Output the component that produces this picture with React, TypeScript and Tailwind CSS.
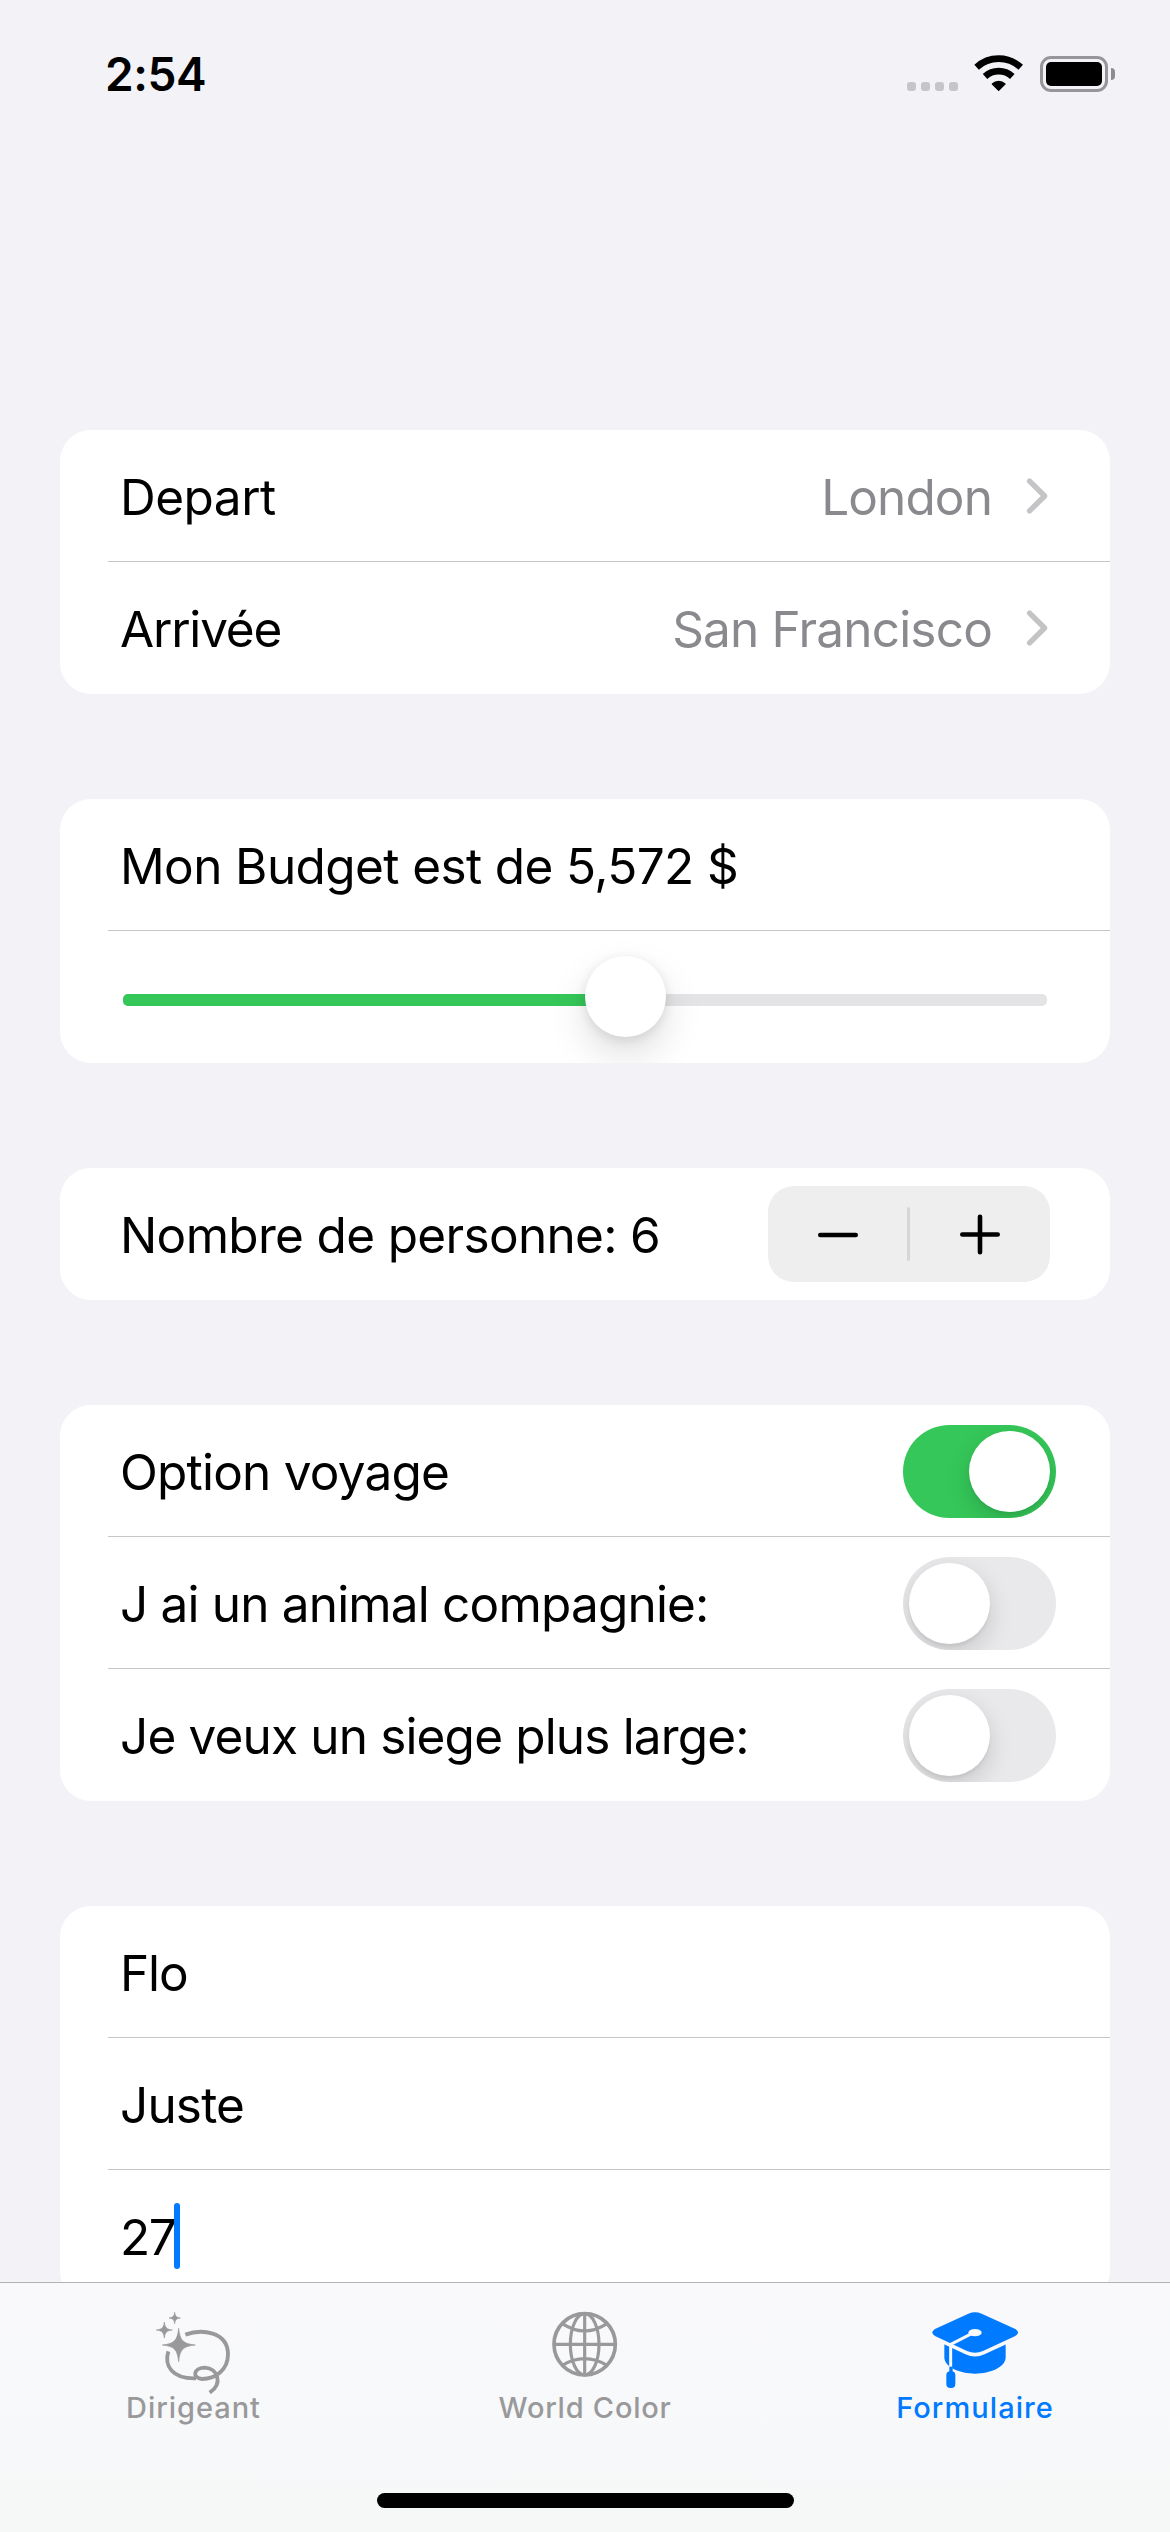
import type { ReactNode } from "react";

function StatusBar() {
  return (
    <header className="flex h-[141px] shrink-0 items-start justify-between pl-[105px] pr-[55px]">
      <div className="pt-[46px] text-[46px] font-semibold leading-[56px] tracking-[-0.42px]">2:54</div>
      <div className="flex pt-[53px]">
        <div className="flex gap-[5px] pt-[29px]">
          <span className="size-[9px] rounded-[3px] bg-[#c5c5ca]" />
          <span className="size-[9px] rounded-[3px] bg-[#c5c5ca]" />
          <span className="size-[9px] rounded-[3px] bg-[#c5c5ca]" />
          <span className="size-[9px] rounded-[3px] bg-[#c5c5ca]" />
        </div>
        <svg className="ml-[15px] h-10 w-[52px]" viewBox="280 69 156 120" fill="none" stroke="#000">
          <path d="M290.8 111.8A98 98 0 0 1 423.2 111.8" strokeWidth="20" />
          <path d="M316.1 139.4A60.5 60.5 0 0 1 397.9 139.4" strokeWidth="20" />
          <path d="M357 181L338 162A28 28 0 0 1 376 162Z" fill="#000" strokeWidth="4" strokeLinejoin="round" />
        </svg>
        <div className="ml-[15px] mt-[3px] h-9 w-[68px] rounded-[11px] border-[3px] border-[#95959a] p-[3px]">
          <div className="h-full w-full rounded-[5px] bg-black" />
        </div>
        <div className="ml-[3px] mt-[15px] h-3 w-1 rounded-r-full bg-[#8c8c91]" />
      </div>
    </header>
  );
}

function Card({ children }: { children: ReactNode }) {
  return <section className="shrink-0 overflow-hidden rounded-[31px] bg-white">{children}</section>;
}

function Row({ children, last = false }: { children: ReactNode; last?: boolean }) {
  return (
    <div className="h-[132px] pl-12">
      <div
        className={
          last
            ? "flex h-full items-center justify-between pl-3"
            : "flex h-full items-center justify-between border-b border-[#c6c6c8] pl-3"
        }
      >
        {children}
      </div>
    </div>
  );
}

function Label({ children, className }: { children: ReactNode; className: string }) {
  return <span className={`pt-[2px] text-[49.5px] leading-[60px] whitespace-nowrap ${className}`}>{children}</span>;
}

function Chevron() {
  return (
    <svg className="h-[38px] w-6" viewBox="0 0 24 38" fill="none" stroke="#c4c4c6" strokeWidth="5.4" strokeLinecap="round" strokeLinejoin="round">
      <path d="M4.6 4.2L19.6 19L4.6 33.8" />
    </svg>
  );
}

function PickerRow({ label, value, last }: { label: ReactNode; value: ReactNode; last?: boolean }) {
  return (
    <Row last={last}>
      {label}
      <div className="flex items-center pr-[61px]">
        {value}
        <div className="ml-[33px]">
          <Chevron />
        </div>
      </div>
    </Row>
  );
}

function Toggle({ on = false }: { on?: boolean }) {
  return (
    <div
      className={
        on
          ? "mt-5 mr-[54px] flex h-[93px] w-[153px] justify-end self-start overflow-hidden rounded-full bg-[#35c759] p-[6px]"
          : "mt-5 mr-[54px] flex h-[93px] w-[153px] justify-start self-start overflow-hidden rounded-full bg-[#e9e9eb] p-[6px]"
      }
    >
      <div className="size-[81px] rounded-full bg-white shadow-[0_9px_24px_rgba(0,0,0,0.15),0_3px_3px_rgba(0,0,0,0.05)]" />
    </div>
  );
}

function BudgetSlider() {
  return (
    <div className="relative mr-[63px] h-[12px] w-[924px] rounded-[5px] bg-[#e4e4e6]">
      <div className="h-full w-[502px] rounded-l-[5px] bg-[#35c759]" />
      <div className="absolute left-[462px] top-[-38px] size-[81px] rounded-full bg-white shadow-[0_18px_39px_rgba(0,0,0,0.13),0_3px_12px_rgba(0,0,0,0.10)]" />
    </div>
  );
}

function Stepper() {
  return (
    <div className="mr-[60px] flex h-24 w-[282px] items-center rounded-[26px] bg-[#eeeeee]">
      <div className="flex h-full w-[139px] items-center justify-center">
        <svg className="h-[42px] w-[42px]" viewBox="0 0 42 42" stroke="#000" strokeWidth="4.6" strokeLinecap="round">
          <path d="M3.3 22H38.7" />
        </svg>
      </div>
      <div className="h-[54px] w-[3px] rounded-full bg-[#d6d6d6]" />
      <div className="flex h-full w-[140px] items-center justify-center">
        <svg className="h-[42px] w-[42px]" viewBox="0 0 42 42" stroke="#000" strokeWidth="4.6" strokeLinecap="round">
          <path d="M3.3 21.5H38.7M21 3.8V39.2" />
        </svg>
      </div>
    </div>
  );
}

function LassoIcon() {
  return (
    <svg className="h-[86px] w-[88px]" viewBox="153 120 264 258" fill="none">
      <g stroke="#99999b" strokeWidth="11.5">
        <path d="M205 244C192 287 216 327 288 325" />
        <path d="M256 194C304 176 384 184 384 253C384 300 346 327 306 327C276 325 279 293 315 293C353 295 370 341 329 368" />
      </g>
      <g fill="#99999b" stroke="#99999b" strokeWidth="2" strokeLinejoin="round">
        <path d="M236 175C240 212 249 221 286 225C249 229 240 238 236 275C232 238 223 229 187 225C223 221 232 212 236 175Z" />
        <path d="M193 156C195 173 200 178 217 180C200 182 195 187 193 204C191 187 186 182 169 180C186 178 191 173 193 156Z" />
        <path d="M224 127C226 139 229 142 241 144C229 146 226 149 224 161C222 149 219 146 207 144C219 142 222 139 224 127Z" />
      </g>
    </svg>
  );
}

function GlobeIcon() {
  return (
    <svg className="h-[86px] w-[88px]" viewBox="183 120 264 258" fill="none" stroke="#99999b" strokeWidth="9.5">
      <circle cx="314" cy="223" r="92" strokeWidth="11" />
      <ellipse cx="314" cy="223" rx="43" ry="92" />
      <path d="M314 131V315M222 223H406M247 161Q314 205 381 161M247 286Q314 246 381 286" />
    </svg>
  );
}

function GraduationCapIcon() {
  const board = "M165 177L265 131Q285 123 305 131L406 177Q422 188 406 198L309 243Q285 254 261 243L165 198Q149 188 165 177Z";
  return (
    <svg className="h-[86px] w-[88px]" viewBox="153 120 264 258" fill="#007aff">
      <path d="M193 215V262C193 292 240 311 285 311C330 311 377 292 377 262V215Z" />
      <path d={board} stroke="#f9f9fb" strokeWidth="22" />
      <path d={board} />
      <ellipse cx="285" cy="188" rx="20" ry="11" fill="#f9f9fb" />
      <path d="M275 191L212 223V294" fill="none" stroke="#f9f9fb" strokeWidth="9" />
      <path d="M208 290H218V307H208Z" />
      <rect x="199" y="304" width="27" height="50" rx="12" />
    </svg>
  );
}

function TabBar() {
  return (
    <nav className="flex h-[250px] shrink-0 flex-col items-center border-t border-[#b2b2b4] bg-linear-to-b from-[#f9f9fb] to-[#f6f8f8]">
      <div className="flex h-[210px] w-full pt-[27px] text-[29px] font-medium leading-[24px] text-[#99999b]">
        <div className="flex flex-1 flex-col items-center">
          <LassoIcon />
          <span className="mr-[3px] tracking-[0.96px]">Dirigeant</span>
        </div>
        <div className="flex flex-1 flex-col items-center">
          <GlobeIcon />
          <span className="tracking-[0.76px]">World Color</span>
        </div>
        <div className="flex flex-1 flex-col items-center text-[#007aff]">
          <GraduationCapIcon />
          <span className="tracking-[1.05px]">Formulaire</span>
        </div>
      </div>
      <div className="h-[15px] w-[417px] rounded-full bg-black" />
    </nav>
  );
}

export default function App() {
  return (
    <div className="flex h-[2532px] w-[1170px] flex-col overflow-hidden bg-[#f2f2f7] font-['Inter',sans-serif] text-black">
      <StatusBar />
      <main className="flex min-h-0 flex-1 flex-col gap-[105px] overflow-hidden px-[60px] pt-[289px]">
        <Card>
          <PickerRow
            label={<Label className="tracking-[-0.5px]">Depart</Label>}
            value={<Label className="tracking-[-0.88px] text-[#8a8a8e]">London</Label>}
          />
          <PickerRow
            last
            label={<Label className="tracking-[-1.2px]">Arrivée</Label>}
            value={<Label className="tracking-[-0.82px] text-[#8a8a8e]">San Francisco</Label>}
          />
        </Card>
        <Card>
          <Row>
            <Label className="tracking-[-0.61px]">Mon Budget est de 5,572 $</Label>
          </Row>
          <Row last>
            <div className="ml-[3px] pt-[6px]">
              <BudgetSlider />
            </div>
          </Row>
        </Card>
        <Card>
          <Row last>
            <Label className="tracking-[-0.67px]">Nombre de personne: 6</Label>
            <Stepper />
          </Row>
        </Card>
        <Card>
          <Row>
            <Label className="tracking-[-0.79px]">Option voyage</Label>
            <Toggle on />
          </Row>
          <Row>
            <Label className="tracking-[-0.82px]">J ai un animal compagnie:</Label>
            <Toggle />
          </Row>
          <Row last>
            <Label className="tracking-[-0.84px]">Je veux un siege plus large:</Label>
            <Toggle />
          </Row>
        </Card>
        <Card>
          <Row>
            <Label className="tracking-[-1.1px]">Flo</Label>
          </Row>
          <Row>
            <Label className="tracking-[-0.84px]">Juste</Label>
          </Row>
          <Row last>
            <div className="flex items-center">
              <Label className="tracking-[-1.49px]">27</Label>
              <span className="-ml-px h-[66px] w-[6px] rounded-full bg-[#007aff]" />
            </div>
          </Row>
        </Card>
      </main>
      <TabBar />
    </div>
  );
}
